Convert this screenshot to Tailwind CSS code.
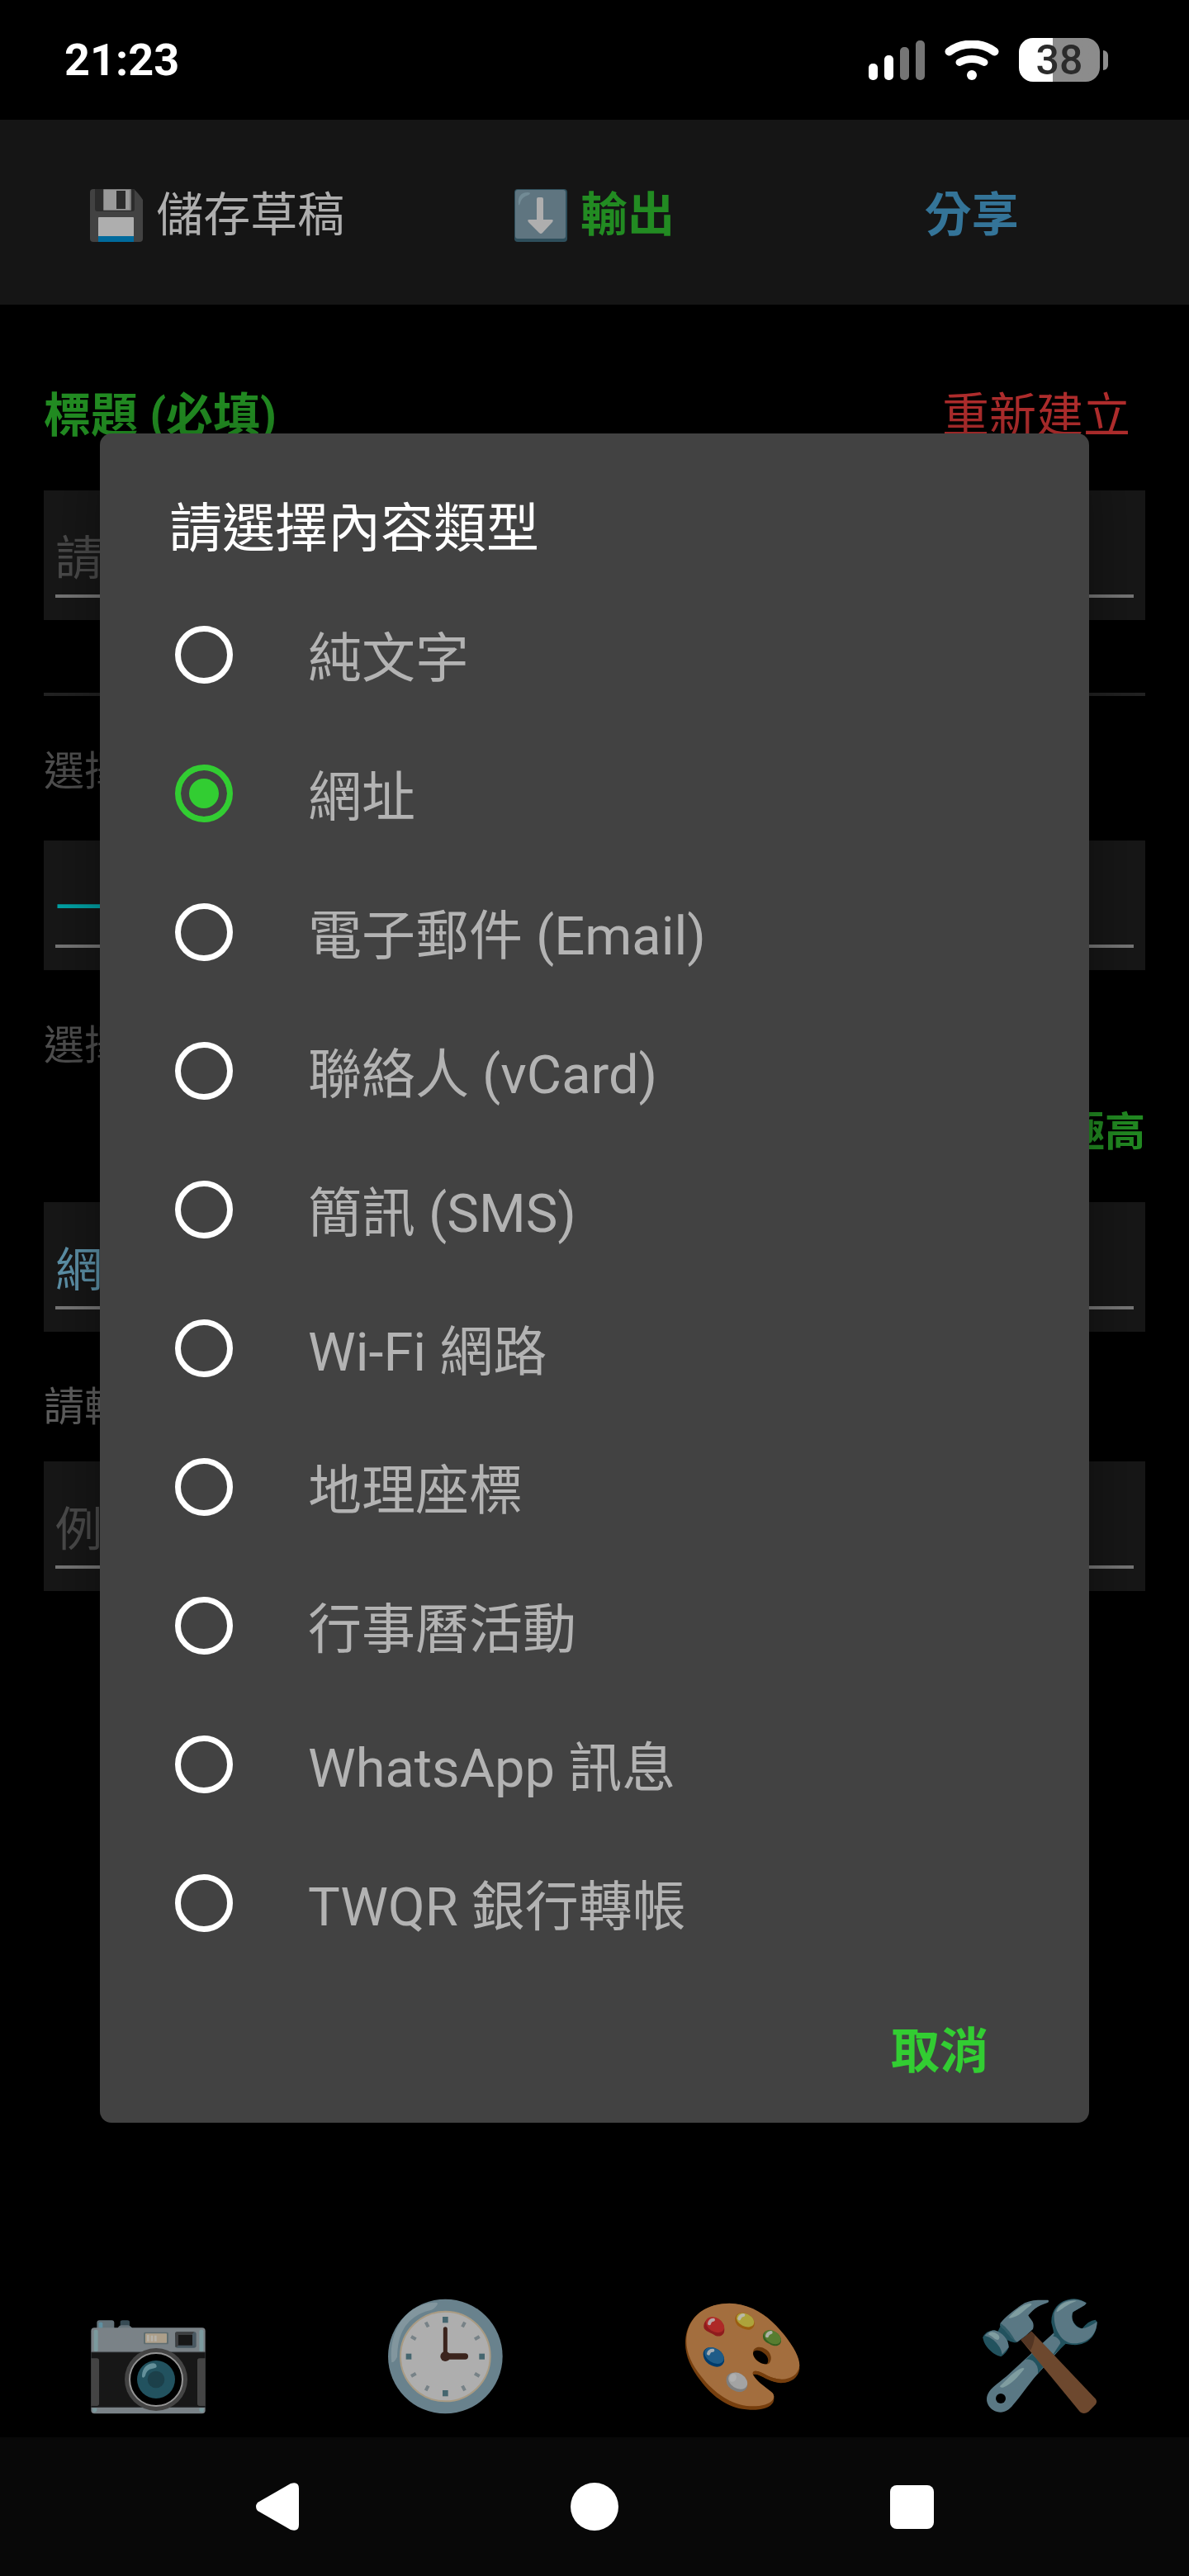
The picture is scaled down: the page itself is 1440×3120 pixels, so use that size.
<!DOCTYPE html>
<html lang="zh-Hant">
<head>
  <meta charset="UTF-8">
  <meta name="viewport" content="width=device-width, initial-scale=1.0">
  <title>QR Code 產生器</title>
  <script src="https://cdn.jsdelivr.net/npm/@tailwindcss/browser@4"></script>
</head>
<body class="min-h-screen flex flex-col bg-black text-white font-[Roboto,'Noto_Sans_CJK_TC',sans-serif]">
  <!-- Status bar -->
  <header class="h-[145px] flex items-center justify-between pl-[78px] pr-[98px]">
    <span class="text-[54px] leading-[64px] font-bold">21:23</span>
    <div class="flex items-center gap-6">
      <svg class="w-[68px] h-[48px]" viewBox="0 0 68 48" fill="#fff">
        <rect x="0" y="28" width="11" height="20" rx="5"/>
        <rect x="19" y="18" width="11" height="30" rx="5"/>
        <rect x="38" y="8" width="11" height="40" rx="5" fill="#757575"/>
        <rect x="57" y="0" width="11" height="48" rx="5" fill="#757575"/>
      </svg>
      <svg class="w-[66px] h-[48px]" viewBox="0 0 66 48" fill="none" stroke="#fff" stroke-linecap="round">
        <path d="M5.500 13.500C21 1.500 45 1.500 60.500 13.500" stroke-width="10"/>
        <path d="M18 26.500C27 21 39 21 48 26.500" stroke-width="9"/>
        <circle cx="33" cy="42" r="6" fill="#fff" stroke="none"/>
      </svg>
      <div class="flex items-center gap-1">
        <div class="w-[98px] h-[53px] rounded-[17px] bg-linear-to-r from-white from-42% to-[#8c8c8c] to-42% text-[#2b2b2b] text-[50px] leading-[54px] font-medium text-center">38</div>
        <div class="w-[6px] h-6 rounded-r-md bg-[#8c8c8c]"></div>
      </div>
    </div>
  </header>

  <div class="relative flex-1 flex flex-col">
    <!-- Toolbar -->
    <div class="h-[224px] px-[35px] grid grid-cols-3 bg-[#151515] text-[57px] leading-[84px] pt-2">
      <button class="flex items-center justify-center gap-4 text-[#aeaeae]">
        <svg class="w-16 h-16" viewBox="0 0 64 64">
          <path d="M4 0H53Q58 4 64 13V60Q64 64 60 64H4Q0 64 0 60V4Q0 0 4 0Z" fill="#424242"/>
          <path d="M6 0H54V24Q54 27 51 27H9Q6 27 6 24Z" fill="#2c2c2c"/>
          <rect x="16" width="34" height="26" rx="1" fill="#7a7a7a"/>
          <rect x="17" y="1" width="31" height="24" fill="#999"/>
          <rect x="32" y="2" width="11" height="22" fill="#2b2b2b"/>
          <rect x="10" y="34" width="43" height="30" rx="1" fill="#aeaeae"/>
          <rect x="10" y="57" width="43" height="7" fill="#006a9c"/>
        </svg>
        儲存草稿
      </button>
      <button class="flex items-center justify-center gap-4 font-bold text-[#228b22]">
        <svg class="w-16 h-16" viewBox="0 0 64 64">
          <rect width="64" height="64" rx="4" fill="#2e4e5b"/>
          <rect x="1" y="1" width="61" height="59" rx="3" fill="#5f7580"/>
          <path d="M5 18C4 9 8 4 16 4C21 4 19 7 15 8C10 10 8 13 7 17C6 20 5 20 5 18Z" fill="#728b95"/>
          <path d="M27 12Q27 10 29 10H33Q35 10 35 12V37H45Q48 37 46 40L34 53Q32 55 30 53L17 40Q15 37 18 37H27Z" fill="#aeaeae"/>
        </svg>
        輸出
      </button>
      <button class="flex items-center justify-center font-bold text-[#347498]">分享</button>
    </div>

    <!-- Form -->
    <main class="flex-1 px-[53px] pt-[93px] text-[57px]">
      <div class="flex items-center justify-between leading-[84px] pr-[18px] mb-12">
        <label for="title" class="font-bold text-[#228b22]">標題 (必填)</label>
        <button class="text-[#b02d2d]">重新建立</button>
      </div>
      <div class="h-[157px] px-[14px] bg-[#171717]">
        <input id="title" type="text" placeholder="請輸入標題" class="block w-full h-[130px] pt-[38px] border-b-4 border-[#777] placeholder:text-[#4b4b4b] outline-none">
      </div>
      <hr class="mt-[88px] border-t-4 border-[#222]">
      <label for="style" class="block mt-16 mb-[55px] text-[49px] leading-[56px] text-[#4f4f4f]">選擇樣式</label>
      <div class="h-[157px] px-[14px] bg-[#171717]">
        <select id="style" class="block w-full h-[130px] pt-[40px] border-b-4 border-[#777] appearance-none text-[#00a5a8]">
          <option>一般</option>
        </select>
      </div>
      <p class="mt-16 text-[49px] leading-[56px] text-[#4f4f4f]">選擇容錯率</p>
      <p class="mt-[49px] mb-14 text-[49px] leading-[56px] font-bold text-right text-[#228b22]">極高</p>
      <div class="h-[157px] px-[14px] bg-[#171717]">
        <select id="type" aria-label="內容類型" class="block w-full h-[130px] pt-[40px] border-b-4 border-[#777] appearance-none text-[#5e93aa]">
          <option>網址</option>
        </select>
      </div>
      <label for="content" class="block mt-16 mb-[37px] text-[49px] leading-[56px] text-[#5f5f5f]">請輸入網址</label>
      <div class="h-[157px] px-[14px] bg-[#171717]">
        <input id="content" type="text" placeholder="例如" class="block w-full h-[130px] pt-[38px] border-b-4 border-[#777] placeholder:text-[#4b4b4b] outline-none">
      </div>
    </main>

    <!-- Tabs -->
    <nav class="grid grid-cols-4 justify-items-center">
      <button aria-label="掃描">
        <svg class="w-[200px] h-[192px]" viewBox="0 0 600 576">
          <path d="M112 182V160Q112 151 121 151H166Q175 151 175 160V182Z" fill="#65737a"/>
          <rect x="119" y="158" width="14" height="22" rx="5" fill="#5f8fa0"/>
          <path d="M197 172V158Q197 151 205 151H223Q231 151 231 158V172Z" fill="#374b54"/>
          <path d="M186 182Q192 169 203 169H225Q236 171 242 182Z" fill="#65737a"/>
          <rect x="91" y="178" width="415" height="312" rx="12" fill="#7a8287"/>
          <rect x="101" y="185" width="15" height="80" rx="6" fill="#7b9a9e"/>
          <rect x="484" y="185" width="15" height="80" rx="6" fill="#7b9a9e"/>
          <rect x="91" y="267" width="415" height="201" fill="#171717"/>
          <path d="M91 267H506M91 466H506" stroke="#2e3234" stroke-width="3"/>
          <path d="M91 289H112Q120 289 120 297V454Q120 462 112 462H91ZM506 289H485Q477 289 477 297V454Q477 462 485 462H506Z" fill="#444"/>
          <path d="M96 470H112V480Q106 488 98 484ZM501 470H484V480Q490 488 499 484Z" fill="#7b9a9e"/>
          <rect x="282" y="194" width="90" height="44" rx="5" fill="#5f6d70"/>
          <rect x="288" y="199" width="78" height="34" rx="2" fill="#ad9f8a"/>
          <path d="M298 204V227M312 206V227M325 206V227" stroke="#b5b1aa" stroke-width="8"/>
          <rect x="396" y="193" width="77" height="58" rx="7" fill="#495861"/>
          <path d="M396 201Q396 193 404 193H465L457 204H408V242L398 249Z" fill="#3e4042"/>
          <rect x="408" y="204" width="51" height="38" fill="#171717"/>
          <circle cx="327" cy="366" r="114" fill="#444"/>
          <circle cx="327" cy="366" r="96" fill="#000" stroke="#959595" stroke-width="6"/>
          <circle cx="327" cy="366" r="69" fill="#22525f"/>
          <circle cx="327" cy="366" r="31" fill="#1c404a"/>
          <path d="M276 350C278 323 296 307 318 307Q329 309 329 319Q328 325 315 326C298 328 291 339 288 352Q285 360 279 359Q275 357 276 350Z" fill="#64909a"/>
        </svg>
      </button>
      <button aria-label="紀錄">
        <svg class="w-[200px] h-[192px]" viewBox="0 0 600 576">
          <circle cx="298" cy="282" r="208" fill="#69828d"/>
          <path d="M103 304C95 243 113 175 153 135C183 104 224 85 266 86Q273 87 267 97Q258 110 248 113C206 121 169 146 148 180C129 211 125 244 123 284Q113 304 103 304Z" fill="#82969e"/>
          <circle cx="298" cy="282" r="163" fill="#aeaeae" stroke="#a99b83" stroke-width="6"/>
          <g fill="#45666f">
            <rect x="288" y="138" width="20" height="22"/>
            <rect x="288" y="405" width="20" height="22"/>
            <rect x="155" y="272" width="20" height="21"/>
            <rect x="421" y="272" width="20" height="21"/>
          </g>
          <g stroke="#778287" stroke-width="12">
            <path d="M369 158L360 175M422 210L405 220M422 354L405 344M369 406L360 389M227 406L236 389M174 354L191 344M174 210L191 220M227 158L236 175"/>
          </g>
          <path d="M298 182V282" stroke="#3b241d" stroke-width="15" stroke-linecap="round"/>
          <path d="M298 282H370" stroke="#3b241d" stroke-width="22" stroke-linecap="round"/>
          <circle cx="298" cy="282" r="18" fill="#3b241d"/>
        </svg>
      </button>
      <button aria-label="樣式">
        <svg class="w-[200px] h-[192px]" viewBox="0 0 600 576">
          <path d="M90 235C90 150 150 92 245 90C330 90 395 135 450 205C485 250 505 290 505 327C500 365 465 384 420 377C392 371 366 352 345 350C355 380 388 393 408 417Q416 432 409 449C398 468 370 477 325 476C250 475 190 430 145 370C110 325 90 280 90 235Z" fill="#773f0e"/>
          <path d="M94 223C96 145 155 90 250 89C330 91 395 135 450 205C485 250 505 285 505 316C500 353 465 370 425 364C385 358 365 332 340 336C331 342 337 351 342 358C358 382 390 395 408 416Q415 427 409 438C395 458 365 464 325 463C258 460 195 415 150 358C112 310 93 268 94 223Z" fill="#a36e3e"/>
          <path d="M336 268C337 245 365 242 385 258C403 272 406 293 395 307C388 313 377 311 370 307C350 302 336 288 336 268Z" fill="#6e3a0c"/>
          <path d="M336 270C340 256 360 259 375 270C391 281 395 298 387 309C369 315 336 292 336 270Z" fill="#000"/>
          <path d="M336 348C350 344 372 357 392 366C405 372 420 377 432 377C425 392 415 405 407 414C385 395 355 380 336 348Z" fill="#000"/>
          <path d="M336 348Q345 343 365 353Q400 373 425 377Q450 380 470 371L425 364C385 358 365 332 340 336Q332 340 336 348Z" fill="#773f0e"/>
          <path d="M157 170C160 145 185 135 203 143C230 153 236 180 230 197C221 212 204 212 190 201C174 191 155 188 157 170Z" fill="#8f1c1d"/>
          <ellipse cx="198" cy="167" rx="36" ry="25" transform="rotate(32 198 167)" fill="#ae2927"/>
          <path d="M271 150C270 130 285 121 305 125C330 130 344 149 341 167C336 187 317 188 300 181C284 175 273 166 271 150Z" fill="#9b5d10"/>
          <ellipse cx="308" cy="150" rx="34" ry="23" transform="rotate(27 308 150)" fill="#ada33b"/>
          <path d="M372 211C371 193 388 184 405 188C427 194 440 211 438 229C433 247 415 246 401 240C390 233 373 229 372 211Z" fill="#365f20"/>
          <ellipse cx="407" cy="212" rx="33" ry="22" transform="rotate(32 407 212)" fill="#577d30"/>
          <path d="M155 275C154 255 173 245 195 251C221 259 234 280 231 301C225 321 205 324 187 316C170 308 157 297 155 275Z" fill="#003c6c"/>
          <ellipse cx="195" cy="279" rx="38" ry="26" transform="rotate(32 195 279)" fill="#1f5c88"/>
          <path d="M239 365C240 345 260 337 282 342C306 350 318 370 315 391C309 411 290 416 270 407C251 399 238 387 239 365Z" fill="#7e7e7e"/>
          <ellipse cx="281" cy="371" rx="37" ry="27" transform="rotate(32 281 371)" fill="#a3a3a3"/>
          <g fill="none" stroke="#bcbcbc" stroke-width="12" stroke-linecap="round" opacity=".85">
            <path d="M177 163Q179 150 192 149"/>
            <path d="M286 145Q290 133 301 132"/>
            <path d="M387 208Q389 197 401 195"/>
            <path d="M174 272Q177 260 190 260"/>
          </g>
          <ellipse cx="263" cy="360" rx="12" ry="15" transform="rotate(28 263 360)" fill="#afafaf"/>
        </svg>
      </button>
      <button aria-label="工具">
        <svg class="w-[200px] h-[192px]" viewBox="0 0 600 576">
          <path d="M349 196L390 235L300 335C270 365 230 425 202 457C181 486 154 492 128 477C104 461 98 433 114 410C129 389 160 370 184 348Z" fill="#5a7884"/>
          <path d="M350 196L392 236L345 280L310 243L350 204L346 190Z" fill="#22525e"/>
          <path d="M340 206Q371 213 373 234L347 274L310 240Z" fill="#5a7884"/>
          <path d="M270 272L312 318L291 344Q294 314 272 298Q258 289 246 294Z" fill="#22525e"/>
          <path d="M340 160C338 110 370 75 423 73Q448 74 467 88Q467 94 459 97L419 121C406 145 425 175 452 181Q475 151 500 149L506 157C505 210 468 245 415 240L390 236L349 196Z" fill="#22525e"/>
          <path d="M350 125C365 85 407 67 450 80L467 88L461 96L418 121C408 145 423 178 451 181Q474 178 506 156C504 211 463 240 410 234C365 222 347 167 350 125Z" fill="#5a7884"/>
          <path d="M359 118C365 94 397 77 432 80Q406 89 388 103Q370 117 359 121Z" fill="#7f9da0"/>
          <path d="M153 390C175 371 205 332 235 324Q245 324 239 331C220 354 196 384 164 395Q153 397 153 390Z" fill="#7f9da0"/>
          <circle cx="156" cy="435" r="18" fill="#000"/>
          <path d="M268 191L500 436Q508 445 501 456L475 483Q458 495 444 484L229 222Z" fill="#6d482e"/>
          <path d="M267 191L280 205Q277 237 264 260L229 222Z" fill="#533523"/>
          <path d="M145 193L159 163L216 230Q200 236 181 223L180 245Z" fill="#22525e"/>
          <path d="M156 160C174 136 215 106 243 88C270 75 298 77 328 77Q334 84 324 88C292 98 275 110 256 133C263 149 281 155 273 183Q246 210 216 230Q194 218 178 190Q162 181 154 170Z" fill="#5a7884"/>
          <path d="M154 160V172Q166 181 178 197Q193 217 211 229Q199 207 187 191Q174 174 157 163Z" fill="#315d69"/>
          <path d="M184 142C205 119 230 94 262 89Q274 91 264 98C245 110 229 131 205 139Q190 145 184 142Z" fill="#7f9da0"/>
          <path d="M91 214C92 202 115 184 137 188C162 195 184 217 185 249Q178 269 157 283C130 278 96 248 91 214Z" fill="#22525e"/>
          <path d="M98 207C108 194 120 186 137 188C163 196 184 219 185 249L161 275Q157 247 130 223Q113 210 98 207Z" fill="#5a7884"/>
          <path d="M112 198Q128 188 145 202Q155 211 149 220Q142 227 128 213Q120 205 112 203Z" fill="#7f9da0"/>
        </svg>
      </button>
    </nav>

    <!-- Content type dialog -->
    <div class="absolute inset-0 flex items-center px-[121px] pb-0.5">
      <form role="dialog" aria-labelledby="dialogTitle" class="w-full bg-[#424242] rounded-[14px] shadow-[0_20px_80px_rgba(0,0,0,0.4)]">
        <h2 id="dialogTitle" class="pt-[74px] pb-[26px] px-[84px] text-[64px] leading-[84px]">請選擇內容類型</h2>
        <div id="typeList"></div>
        <div class="flex justify-end pt-[34px] pb-[22px] pr-[94px]">
          <button type="button" class="h-[126px] px-7 text-[59px] font-bold text-[#32cd32]">取消</button>
        </div>
      </form>
    </div>
  </div>

  <!-- System navigation -->
  <footer class="h-[168px] flex justify-center bg-[#080808]">
    <button aria-label="返回" class="w-96 flex items-center justify-center">
      <svg class="w-[52px] h-[58px]" viewBox="0 0 52 58" fill="#fff"><path d="M2 24L42 1Q52 -2 52 7V51Q52 60 42 57L2 34Q-2 29 2 24Z"/></svg>
    </button>
    <button aria-label="主畫面" class="w-96 flex items-center justify-center">
      <span class="w-[58px] h-[58px] rounded-full bg-white"></span>
    </button>
    <button aria-label="最近使用" class="w-96 flex items-center justify-center">
      <span class="w-[53px] h-[53px] rounded-lg bg-white"></span>
    </button>
  </footer>

<script>
  const types = ["純文字", "網址", "電子郵件 (Email)", "聯絡人 (vCard)", "簡訊 (SMS)", "Wi-Fi 網路", "地理座標", "行事曆活動", "WhatsApp 訊息", "TWQR 銀行轉帳"];
  const selected = 1;
  document.querySelector("#typeList").innerHTML = types.map((name, i) => `
    <label for="type${i}" class="h-[168px] flex items-center gap-[91px] pl-[91px] text-[65px] leading-[84px] text-[#b3b3b3]">
      <input type="radio" name="contentType" id="type${i}" ${i === selected ? "checked" : ""} class="appearance-none shrink-0 w-[70px] h-[70px] rounded-full border-[7px] border-white checked:border-[#32cd32] checked:bg-[#32cd32] checked:shadow-[inset_0_0_0_10px_#424242]">
      <span class="pt-2.5">${name}</span>
    </label>`).join("");
</script>
</body>
</html>
